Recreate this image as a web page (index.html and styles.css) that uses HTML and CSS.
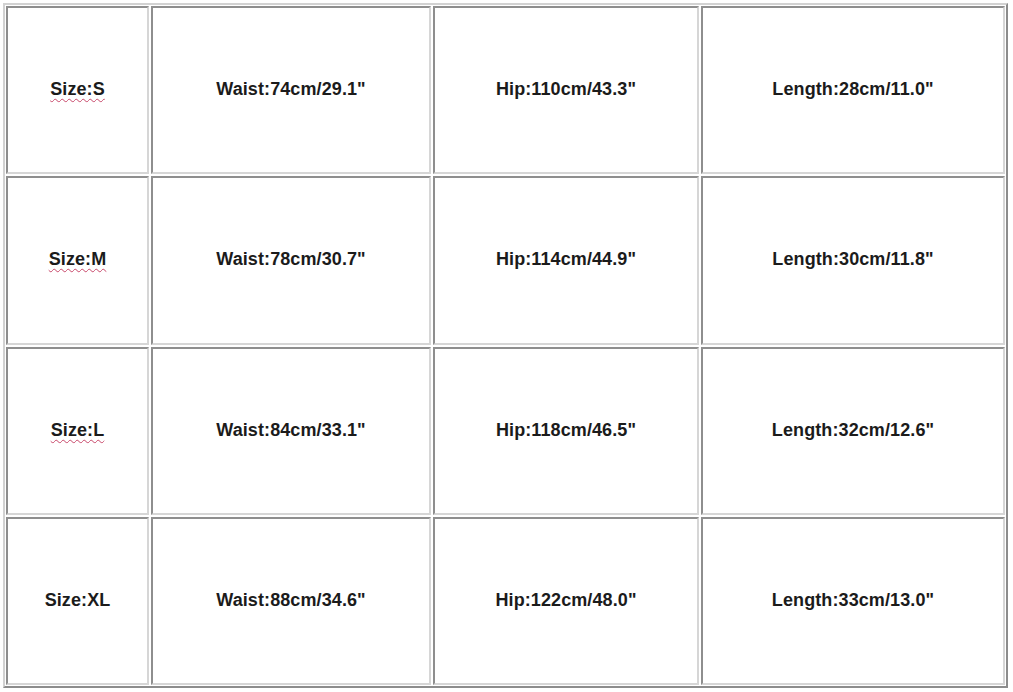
FILE: index.html
```html
<!DOCTYPE html>
<html>
<head>
<meta charset="utf-8">
<link rel="stylesheet" href="styles.css">
</head>
<body>
<div class="page">
  <div class="chart">
    <div class="cell"><span class="spell">Size:S</span></div>
    <div class="cell">Waist:74cm/29.1"</div>
    <div class="cell">Hip:110cm/43.3"</div>
    <div class="cell">Length:28cm/11.0"</div>

    <div class="cell"><span class="spell">Size:M</span></div>
    <div class="cell">Waist:78cm/30.7"</div>
    <div class="cell">Hip:114cm/44.9"</div>
    <div class="cell">Length:30cm/11.8"</div>

    <div class="cell"><span class="spell">Size:L</span></div>
    <div class="cell">Waist:84cm/33.1"</div>
    <div class="cell">Hip:118cm/46.5"</div>
    <div class="cell">Length:32cm/12.6"</div>

    <div class="cell">Size:XL</div>
    <div class="cell">Waist:88cm/34.6"</div>
    <div class="cell">Hip:122cm/48.0"</div>
    <div class="cell">Length:33cm/13.0"</div>
  </div>
</div>
</body>
</html>
```
FILE: styles.css
```css
html, body {
  margin: 0;
  padding: 0;
  background: #ffffff;
}
.page {
  padding: 3px;
  width: 1013px;
  height: 692px;
  box-sizing: border-box;
}
.chart {
  width: 1005px;
  box-sizing: border-box;
  border: 2px solid;
  border-color: #d2d2d2 #8c8c8c #8c8c8c #d2d2d2;
  padding: 1px;
  display: grid;
  grid-template-columns: 143px 280px 266px 304px;
  grid-template-rows: 168px 169px 168px 168px;
  gap: 2px;
}
.cell {
  border: 2px solid;
  border-color: #8e8e8e #d6d6d6 #d6d6d6 #8e8e8e;
  display: flex;
  align-items: center;
  justify-content: center;
  font-family: "Liberation Sans", Arial, sans-serif;
  font-weight: bold;
  font-size: 18px;
  letter-spacing: 0.1px;
  color: #1b1b1b;
  padding-bottom: 2px;
}
.spell {
  text-decoration: underline wavy #c8486a;
  text-decoration-thickness: 1.3px;
  text-underline-offset: 3px;
}
```
